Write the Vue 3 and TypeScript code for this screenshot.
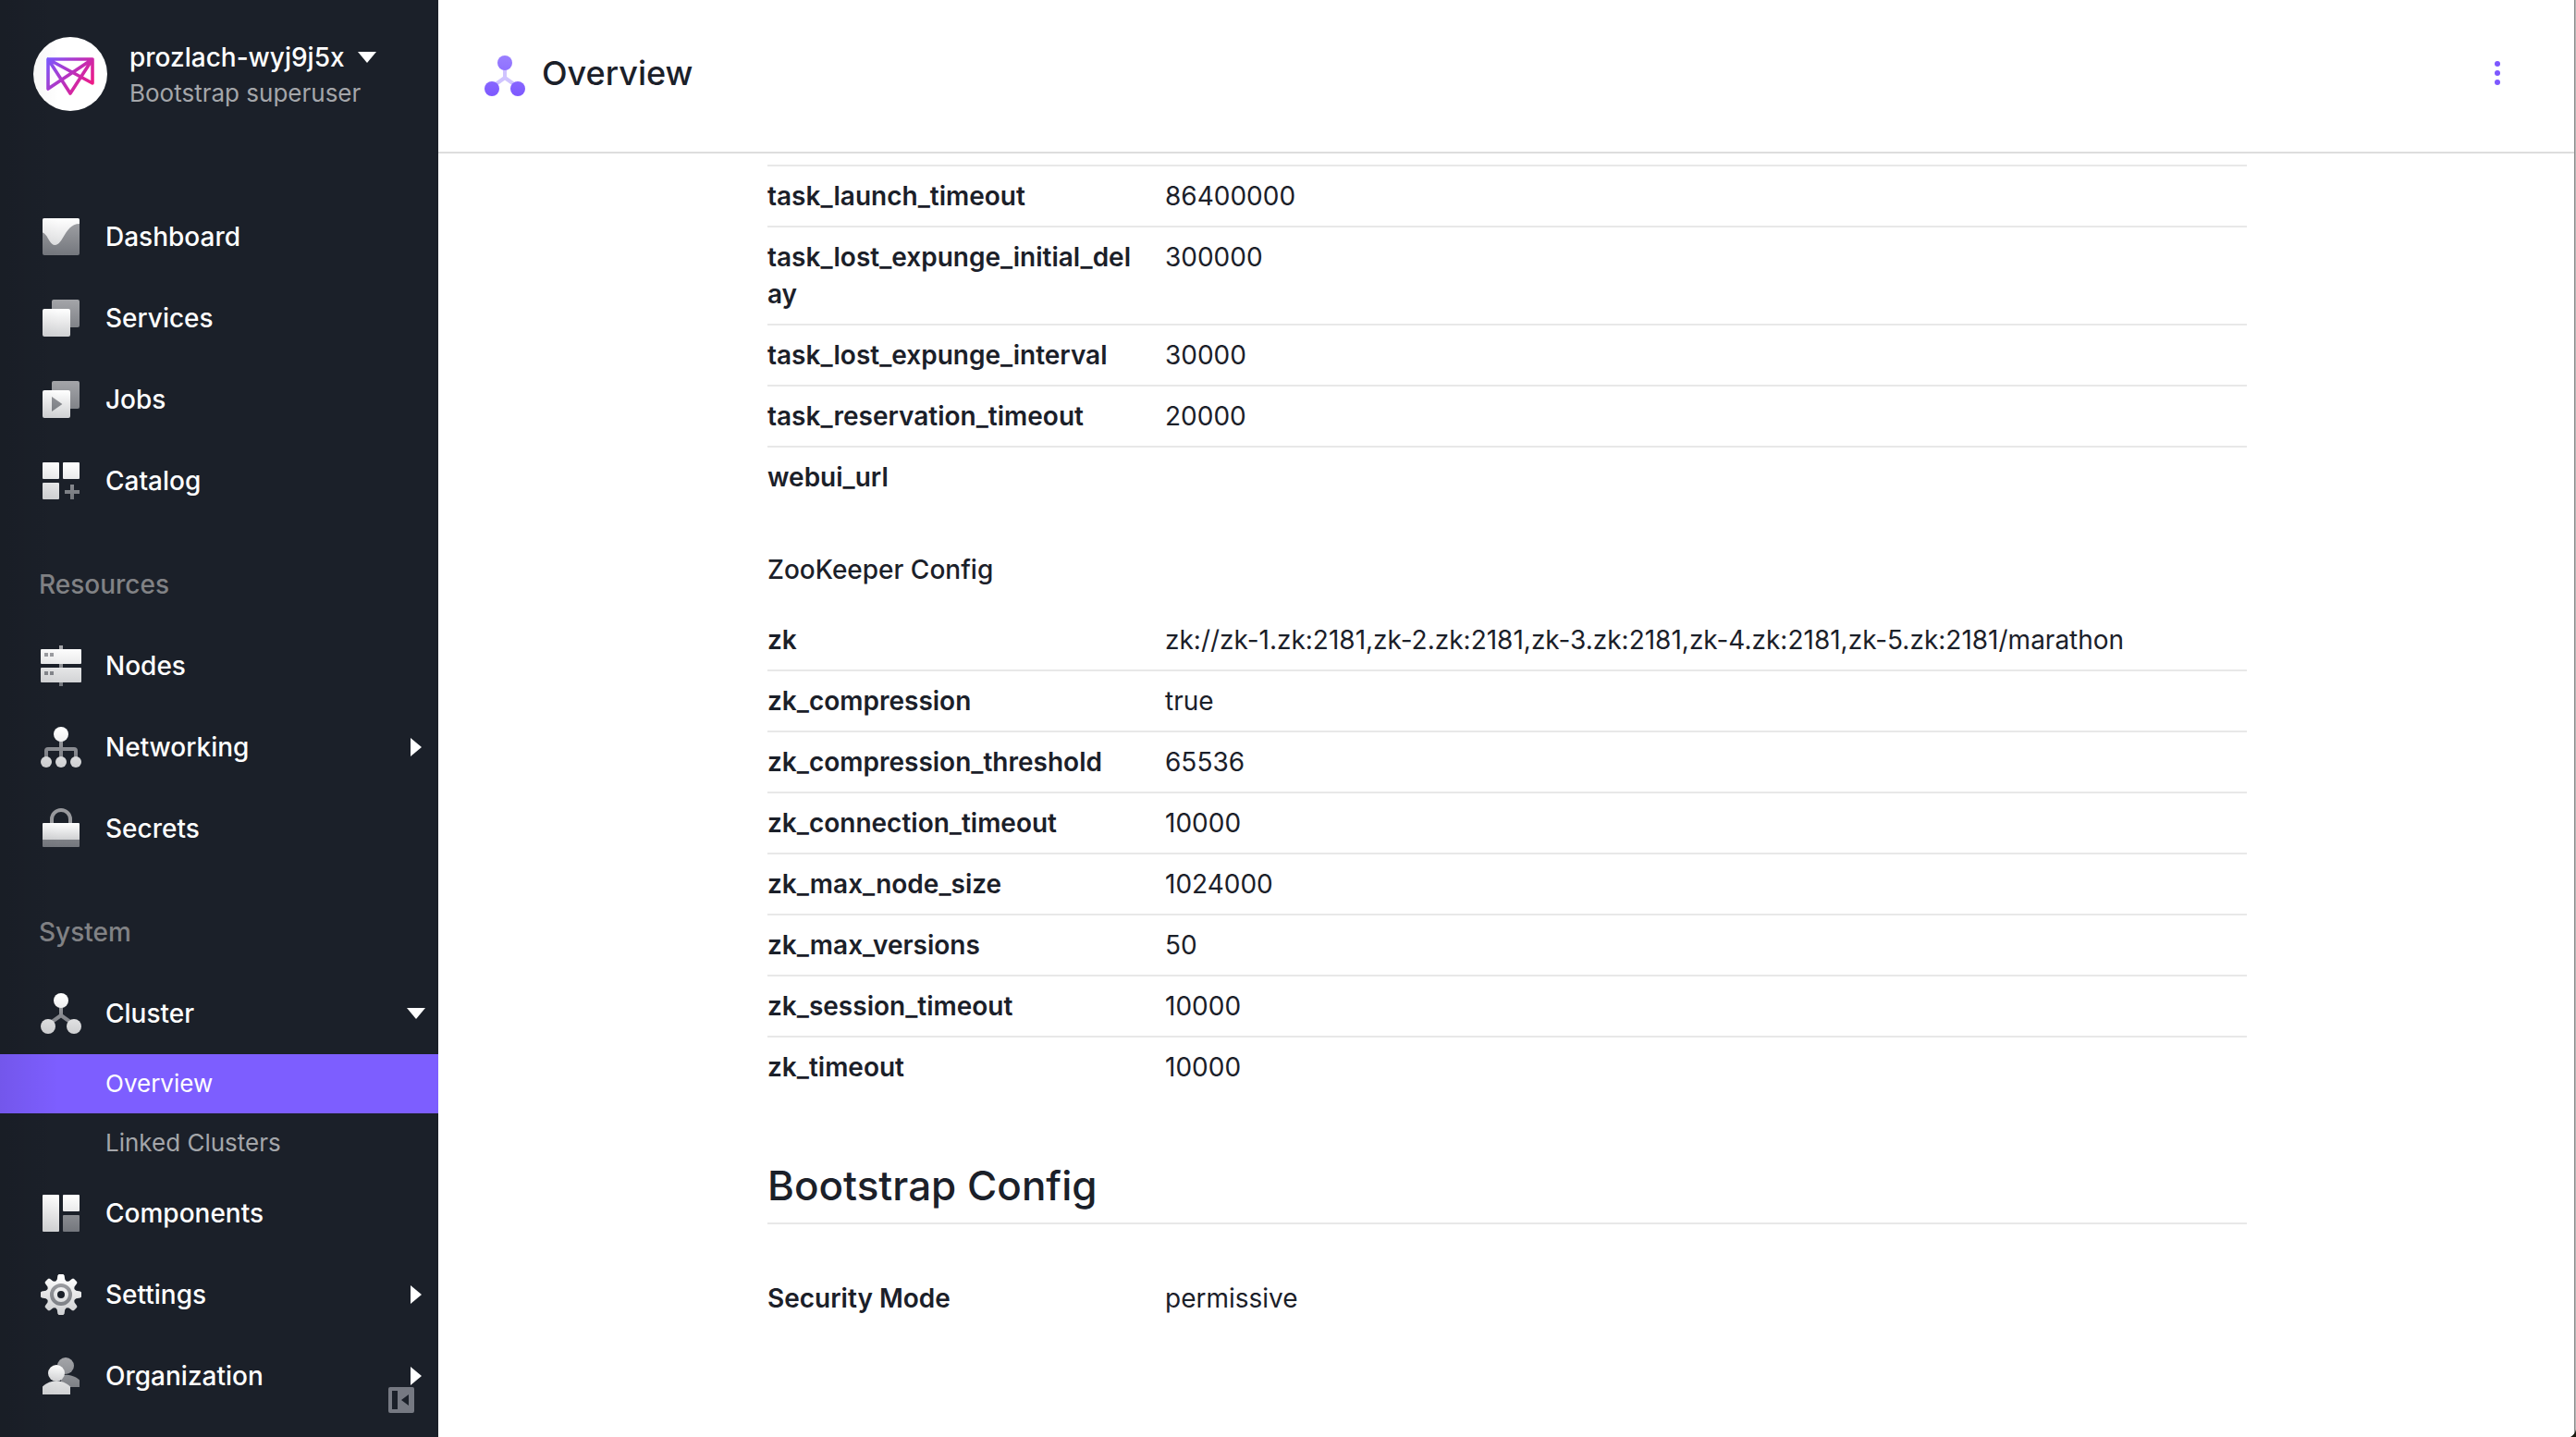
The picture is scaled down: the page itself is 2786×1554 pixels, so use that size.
<script setup lang="ts">
import { ref } from 'vue'

interface NavItem {
  label: string
  icon: string
  caret?: 'right' | 'down'
  children?: { label: string; active: boolean }[]
}

interface NavSection {
  title?: string
  items: NavItem[]
}

interface ConfigRow {
  key: string
  value: string
}

const sections: NavSection[] = [
  {
    items: [
      { label: 'Dashboard', icon: 'dashboard' },
      { label: 'Services', icon: 'services' },
      { label: 'Jobs', icon: 'jobs' },
      { label: 'Catalog', icon: 'catalog' },
    ],
  },
  {
    title: 'Resources',
    items: [
      { label: 'Nodes', icon: 'nodes' },
      { label: 'Networking', icon: 'networking', caret: 'right' },
      { label: 'Secrets', icon: 'secrets' },
    ],
  },
  {
    title: 'System',
    items: [
      {
        label: 'Cluster',
        icon: 'cluster',
        caret: 'down',
        children: [
          { label: 'Overview', active: true },
          { label: 'Linked Clusters', active: false },
        ],
      },
      { label: 'Components', icon: 'components' },
      { label: 'Settings', icon: 'settings', caret: 'right' },
      { label: 'Organization', icon: 'organization', caret: 'right' },
    ],
  },
]

const flagRows = ref<ConfigRow[]>([
  { key: 'task_launch_timeout', value: '86400000' },
  { key: 'task_lost_expunge_initial_delay', value: '300000' },
  { key: 'task_lost_expunge_interval', value: '30000' },
  { key: 'task_reservation_timeout', value: '20000' },
  { key: 'webui_url', value: '' },
])

const zooKeeperRows = ref<ConfigRow[]>([
  { key: 'zk', value: 'zk://zk-1.zk:2181,zk-2.zk:2181,zk-3.zk:2181,zk-4.zk:2181,zk-5.zk:2181/marathon' },
  { key: 'zk_compression', value: 'true' },
  { key: 'zk_compression_threshold', value: '65536' },
  { key: 'zk_connection_timeout', value: '10000' },
  { key: 'zk_max_node_size', value: '1024000' },
  { key: 'zk_max_versions', value: '50' },
  { key: 'zk_session_timeout', value: '10000' },
  { key: 'zk_timeout', value: '10000' },
])

const bootstrapRows = ref<ConfigRow[]>([{ key: 'Security Mode', value: 'permissive' }])

// Outline of the eight-toothed settings gear, centred on a 24-unit grid.
function gearOutline(): string {
  const profile: [number, number][] = [
    [-2.7, -7.4],
    [-2.1, -8.2],
    [-1.8, -10.4],
    [-1.2, -11],
    [1.2, -11],
    [1.8, -10.4],
    [2.1, -8.2],
    [2.7, -7.4],
  ]
  const points: string[] = []
  for (let tooth = 0; tooth < 8; tooth++) {
    const angle = (tooth * Math.PI) / 4
    for (const [x, y] of profile) {
      const px = 12 + x * Math.cos(angle) - y * Math.sin(angle)
      const py = 12 + x * Math.sin(angle) + y * Math.cos(angle)
      points.push(`${px.toFixed(2)} ${py.toFixed(2)}`)
    }
  }
  return `M${points.join('L')}ZM12 10a2 2 0 1 0 0 4a2 2 0 1 0 0-4Z`
}

const gearPath = gearOutline()
</script>

<template>
  <div class="app">
    <svg class="defs" width="0" height="0" aria-hidden="true">
      <defs>
        <linearGradient id="light" gradientUnits="userSpaceOnUse" x1="0" y1="2" x2="0" y2="22">
          <stop offset="0" stop-color="#ffffff" />
          <stop offset="1" stop-color="#d0d1d3" />
        </linearGradient>
        <linearGradient id="light-box" x1="0" y1="0" x2="0" y2="1">
          <stop offset="0" stop-color="#ffffff" />
          <stop offset="1" stop-color="#d0d1d3" />
        </linearGradient>
        <linearGradient id="gray" gradientUnits="userSpaceOnUse" x1="0" y1="2" x2="0" y2="22">
          <stop offset="0" stop-color="#a4a5a9" />
          <stop offset="1" stop-color="#74777d" />
        </linearGradient>
        <linearGradient id="violet" gradientUnits="userSpaceOnUse" x1="0" y1="1" x2="0" y2="23">
          <stop offset="0" stop-color="#9a7fff" />
          <stop offset="1" stop-color="#7d58ff" />
        </linearGradient>
        <linearGradient id="brand" gradientUnits="userSpaceOnUse" x1="16" y1="24" x2="62" y2="58">
          <stop offset="0" stop-color="#7d58ff" />
          <stop offset="0.5" stop-color="#b832be" />
          <stop offset="1" stop-color="#f5187f" />
        </linearGradient>
      </defs>
    </svg>

    <aside class="sidebar">
      <button class="profile" type="button">
        <svg class="avatar" viewBox="0 0 80 80" aria-hidden="true">
          <circle cx="40" cy="40" r="40" fill="#fff" />
          <path d="M16 56V24H64V50L16 24L40 61L64 24Z" fill="none" stroke="url(#brand)" stroke-width="3.6" stroke-linejoin="round" />
        </svg>
        <span class="profile-text">
          <span class="profile-name">
            prozlach-wyj9j5x
            <svg class="caret" viewBox="0 0 20 20" aria-hidden="true"><path d="M0 4H20L10 16Z" fill="currentColor" /></svg>
          </span>
          <span class="profile-role">Bootstrap superuser</span>
        </span>
      </button>

      <nav class="nav">
        <section v-for="(section, index) in sections" :key="index">
          <h2 v-if="section.title" class="nav-title">{{ section.title }}</h2>
          <template v-for="item in section.items" :key="item.label">
            <a class="nav-item" href="#">
              <svg class="icon" viewBox="0 0 24 24" aria-hidden="true">
                <g v-if="item.icon === 'dashboard'">
                  <rect x="2" y="2" width="20" height="20" rx="1" fill="url(#gray)" />
                  <path d="M2 9.7C4.8 10.4 5.6 16.5 8.7 16.5C13.2 16.5 14.2 5 22 5V3a1 1 0 0 0-1-1H3a1 1 0 0 0-1 1Z" fill="url(#light)" />
                </g>
                <g v-else-if="item.icon === 'services'">
                  <rect x="7" y="2" width="15" height="15" rx="1" fill="url(#gray)" />
                  <rect x="2" y="7" width="15" height="15" rx="1" fill="url(#light-box)" />
                </g>
                <g v-else-if="item.icon === 'jobs'">
                  <rect x="7" y="2" width="15" height="15" rx="1" fill="url(#gray)" />
                  <rect x="2" y="7" width="15" height="15" rx="1" fill="url(#light-box)" />
                  <path d="M7 10.5L12.7 14.5L7 18.5Z" fill="url(#gray)" />
                </g>
                <g v-else-if="item.icon === 'catalog'">
                  <path d="M2.5 2h8a.5.5 0 0 1 .5.5v8a.5.5 0 0 1-.5.5h-8a.5.5 0 0 1-.5-.5v-8a.5.5 0 0 1 .5-.5ZM13.5 2h8a.5.5 0 0 1 .5.5v8a.5.5 0 0 1-.5.5h-8a.5.5 0 0 1-.5-.5v-8a.5.5 0 0 1 .5-.5ZM2.5 13h8a.5.5 0 0 1 .5.5v8a.5.5 0 0 1-.5.5h-8a.5.5 0 0 1-.5-.5v-8a.5.5 0 0 1 .5-.5Z" fill="url(#light)" />
                  <path d="M17 14h2v3h3v2h-3v3h-2v-3h-3v-2h3Z" fill="url(#gray)" />
                </g>
                <g v-else-if="item.icon === 'nodes'">
                  <rect x="11" y="1" width="2" height="22" fill="url(#gray)" />
                  <rect x="1" y="3" width="22" height="8" rx="0.5" fill="url(#light)" />
                  <rect x="1" y="13" width="22" height="8" rx="0.5" fill="url(#light)" />
                  <path d="M3 5h2v2H3ZM6 5h2v2H6ZM3 15h2v2H3ZM6 15h2v2H6Z" fill="url(#gray)" />
                </g>
                <g v-else-if="item.icon === 'networking'">
                  <path d="M4 18v-4a1 1 0 0 1 1-1h14a1 1 0 0 1 1 1v4M12 8v10" fill="none" stroke="url(#gray)" stroke-width="2" />
                  <circle cx="12" cy="5" r="4" fill="url(#light)" />
                  <circle cx="4" cy="20" r="3" fill="url(#light)" />
                  <circle cx="12" cy="20" r="3" fill="url(#light)" />
                  <circle cx="20" cy="20" r="3" fill="url(#light)" />
                </g>
                <g v-else-if="item.icon === 'secrets'">
                  <path d="M7 9.5V7a5 5 0 0 1 10 0v2.5" fill="none" stroke="#98999d" stroke-width="2" />
                  <path d="M2 18h20v3.5a.5.5 0 0 1-.5.5h-19a.5.5 0 0 1-.5-.5Z" fill="url(#gray)" />
                  <path d="M2.5 9h19a.5.5 0 0 1 .5.5V18H2V9.5a.5.5 0 0 1 .5-.5Z" fill="url(#light-box)" />
                </g>
                <g v-else-if="item.icon === 'cluster'">
                  <path d="M12 8v5M5 18l7-5l7 5" fill="none" stroke="url(#gray)" stroke-width="2" />
                  <circle cx="12" cy="5" r="4" fill="url(#light)" />
                  <circle cx="5" cy="19" r="4" fill="url(#light)" />
                  <circle cx="19" cy="19" r="4" fill="url(#light)" />
                </g>
                <g v-else-if="item.icon === 'components'">
                  <rect x="2" y="2" width="9" height="20" rx="0.5" fill="url(#light)" />
                  <rect x="13" y="2" width="9" height="9" rx="0.5" fill="url(#light)" />
                  <rect x="13" y="13" width="9" height="9" rx="0.5" fill="url(#gray)" />
                </g>
                <g v-else-if="item.icon === 'settings'">
                  <path :d="gearPath" fill="url(#light)" fill-rule="evenodd" />
                  <circle cx="12" cy="12" r="5" fill="none" stroke="url(#gray)" stroke-width="2" />
                </g>
                <g v-else>
                  <circle cx="14.5" cy="6.5" r="4.5" fill="url(#gray)" />
                  <path d="M12 11.4C16 11 20 12 22 14.2V18H12Z" fill="url(#gray)" />
                  <path d="M2 22V17.8C4.2 15.6 7 14.8 9.5 14.8S14.8 15.6 17 17.8V22Z" fill="url(#light)" />
                  <circle cx="9.5" cy="10.5" r="4.5" fill="url(#light-box)" />
                </g>
              </svg>
              <span class="nav-label">{{ item.label }}</span>
              <svg v-if="item.caret" class="caret" viewBox="0 0 20 20" aria-hidden="true">
                <path :d="item.caret === 'right' ? 'M4 0L16 10L4 20Z' : 'M0 4H20L10 16Z'" fill="currentColor" />
              </svg>
            </a>
            <a
              v-for="child in item.children ?? []"
              :key="child.label"
              class="nav-child"
              :class="{ active: child.active }"
              href="#"
            >{{ child.label }}</a>
          </template>
        </section>
      </nav>

      <button class="collapse" type="button" aria-label="Collapse sidebar">
        <svg viewBox="0 0 28 28" aria-hidden="true">
          <path fill-rule="evenodd" fill="#767982" d="M2 0H26a2 2 0 0 1 2 2V26a2 2 0 0 1-2 2H2a2 2 0 0 1-2-2V2a2 2 0 0 1 2-2ZM4 4V24H10V4ZM22 8L14 14L22 20Z" />
        </svg>
      </button>
    </aside>

    <main class="main">
      <header class="page-header">
        <svg class="icon" viewBox="0 0 24 24" aria-hidden="true">
          <path d="M12 8v5M5 18l7-5l7 5" fill="none" stroke="#d0c4ff" stroke-width="2" />
          <circle cx="12" cy="5" r="4" fill="url(#violet)" />
          <circle cx="5" cy="19" r="4" fill="url(#violet)" />
          <circle cx="19" cy="19" r="4" fill="url(#violet)" />
        </svg>
        <h1 class="page-title">Overview</h1>
        <button class="menu" type="button" aria-label="More actions">
          <svg viewBox="0 0 32 42" aria-hidden="true">
            <circle cx="16" cy="11" r="3" />
            <circle cx="16" cy="21" r="3" />
            <circle cx="16" cy="31" r="3" />
          </svg>
        </button>
      </header>

      <div class="content">
        <table class="config config-continued">
          <tbody>
            <tr v-for="row in flagRows" :key="row.key">
              <th scope="row">{{ row.key }}</th>
              <td>{{ row.value }}</td>
            </tr>
          </tbody>
        </table>

        <h3 class="subheading">ZooKeeper Config</h3>
        <table class="config">
          <tbody>
            <tr v-for="row in zooKeeperRows" :key="row.key">
              <th scope="row">{{ row.key }}</th>
              <td>{{ row.value }}</td>
            </tr>
          </tbody>
        </table>

        <h2 class="heading">Bootstrap Config</h2>
        <table class="config">
          <tbody>
            <tr v-for="row in bootstrapRows" :key="row.key">
              <th scope="row">{{ row.key }}</th>
              <td>{{ row.value }}</td>
            </tr>
          </tbody>
        </table>
      </div>
    </main>

    <div class="window-edge"></div>
    <svg class="window-corner" viewBox="0 0 6 8" aria-hidden="true"><path d="M6 0V8H0C3 6 5 4 6 0Z" fill="#1c1b12" /></svg>
  </div>
</template>

<style>
body {
  margin: 0;
  background: #fff;
}
</style>

<style scoped>
.app {
  position: relative;
  display: flex;
  min-height: 100vh;
  font-family: Inter, "Liberation Sans", sans-serif;
  font-size: 28px;
  line-height: 40px;
  color: #1b2029;
}

.defs {
  position: absolute;
}

button {
  margin: 0;
  padding: 0;
  border: 0;
  background: none;
  color: inherit;
  font: inherit;
  text-align: left;
}

a {
  color: inherit;
  text-decoration: none;
}

.sidebar {
  position: relative;
  flex: none;
  box-sizing: border-box;
  width: 474px;
  background: #1b2029;
  color: #fff;
}

.sidebar::after {
  content: "";
  position: absolute;
  inset: 0 auto 0 0;
  width: 64px;
  background: linear-gradient(to right, rgba(0, 0, 0, 0.08), rgba(0, 0, 0, 0));
  pointer-events: none;
}

.profile {
  display: flex;
  gap: 24px;
  padding: 40px 36px 92px;
}

.avatar {
  width: 80px;
  height: 80px;
}

.profile-text {
  display: flex;
  flex-direction: column;
}

.profile-name {
  display: flex;
  align-items: center;
  gap: 14px;
  font-weight: 500;
  line-height: 44px;
}

.profile-role {
  font-size: 26px;
  line-height: 34px;
  color: #a4a6aa;
}

.caret {
  flex: none;
  width: 20px;
  height: 20px;
}

.icon {
  flex: none;
  width: 48px;
  height: 48px;
}

.nav-title {
  margin: 0;
  padding: 48px 42px 24px;
  font-size: 28px;
  font-weight: 500;
  color: #818285;
}

.nav-item {
  display: flex;
  align-items: center;
  gap: 24px;
  height: 88px;
  padding: 0 14px 0 42px;
  font-weight: 500;
}

.nav-label {
  flex: 1;
}

.nav-child {
  display: block;
  padding: 12px 14px 12px 114px;
  font-size: 26px;
  color: #a4a6aa;
}

.nav-child.active {
  background: #7d5eff;
  color: #fff;
}

.collapse {
  position: absolute;
  right: 26px;
  bottom: 26px;
  width: 28px;
  height: 28px;
}

.collapse svg,
.menu svg {
  display: block;
}

.main {
  flex: 1;
  min-width: 0;
}

.page-header {
  display: flex;
  align-items: flex-start;
  gap: 16px;
  padding: 58px 69px 58px 48px;
  border-bottom: 2px solid #ddd;
}

.page-title {
  flex: 1;
  margin: 0;
  font-size: 36px;
  font-weight: 500;
  line-height: 42px;
}

.menu svg {
  width: 32px;
  height: 42px;
  fill: #7d58ff;
}

.content {
  max-width: 1600px;
  margin: 0 auto;
  padding: 12px 0 48px;
}

.config {
  width: 100%;
  border-spacing: 0;
  table-layout: fixed;
}

.config-continued {
  border-top: 2px solid #e8e8e8;
}

.config th,
.config td {
  height: 40px;
  padding: 12px 0;
  border-bottom: 2px solid #e8e8e8;
  text-align: left;
  vertical-align: top;
  font-weight: 400;
}

.config th {
  box-sizing: content-box;
  width: 400px;
  padding-right: 30px;
  font-weight: 600;
  word-break: break-all;
}

.config tr:last-child th,
.config tr:last-child td {
  border-bottom: 0;
}

.subheading {
  margin: 48px 0 24px;
  font-size: 28px;
  font-weight: 500;
}

.heading {
  margin: 68px 0 48px;
  padding-bottom: 12px;
  border-bottom: 2px solid #e8e8e8;
  font-size: 44px;
  font-weight: 500;
  line-height: 56px;
}

.window-edge {
  position: absolute;
  inset: 0 0 0 auto;
  width: 1px;
  border-left: 1px solid #8a8a8a;
  background: #b6b6b6;
}

.window-corner {
  position: absolute;
  right: 0;
  bottom: 0;
  width: 6px;
  height: 8px;
}
</style>
